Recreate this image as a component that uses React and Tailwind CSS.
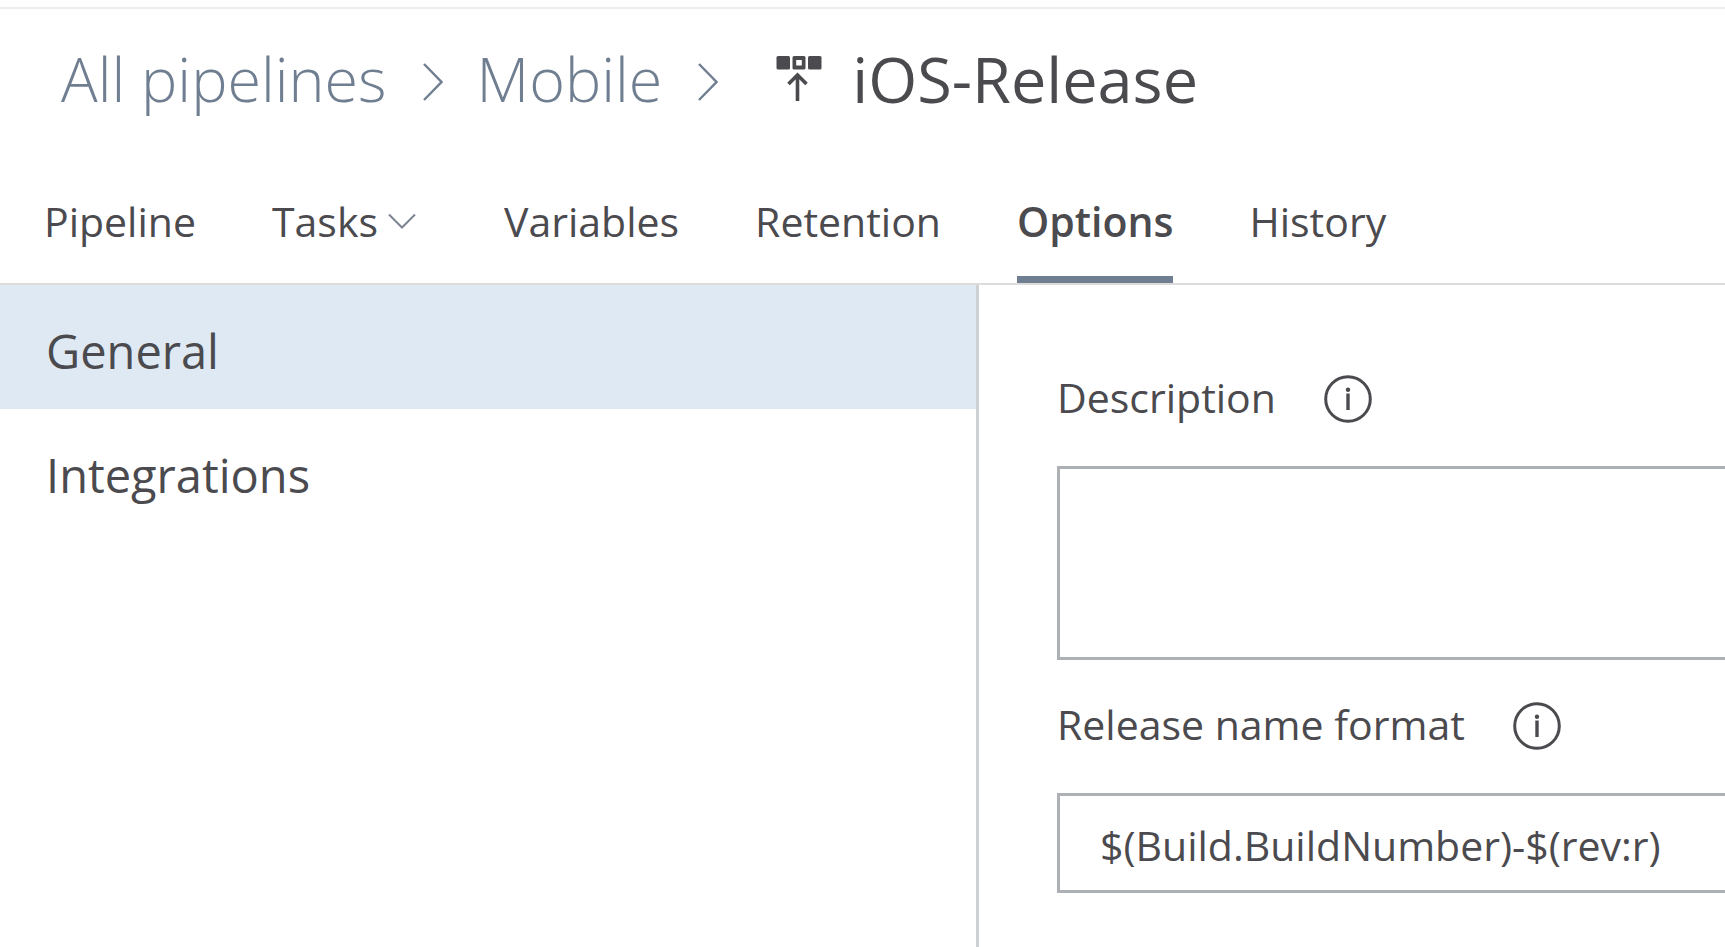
import React from "react";

const tabs = ["Pipeline", "Tasks", "Variables", "Retention", "Options", "History"];

function Separator() {
  return (
    <svg className="h-10 w-5 shrink-0" viewBox="0 0 20 40" fill="none" stroke="#6f7e90" strokeWidth="2.4" aria-hidden="true">
      <path d="M1 2 18.5 20 1 38" />
    </svg>
  );
}

function ChevronDown() {
  return (
    <svg className="h-4 w-7 shrink-0" viewBox="0 0 28 16" fill="none" stroke="#7b8591" strokeWidth="2" aria-hidden="true">
      <path d="M1 1.5 14 14.5 27 1.5" />
    </svg>
  );
}

function ReleaseIcon() {
  return (
    <svg className="h-12 w-12 shrink-0" viewBox="0 0 48 48" fill="#4b4a4e" aria-hidden="true">
      <rect x="0.5" y="1" width="13.5" height="13.5" rx="1.5" />
      <path fillRule="evenodd" d="M18 1h10a1.5 1.5 0 0 1 1.5 1.5v10.5a1.5 1.5 0 0 1-1.5 1.5H18a1.5 1.5 0 0 1-1.500-1.500V2.500A1.500 1.500 0 0 1 18 1Zm2.200 4v5.500h5.600V5Z" />
      <rect x="32" y="1" width="13.5" height="13.5" rx="1.5" />
      <path d="M21.500 46V21M12.500 29 21.500 20 30.500 29" fill="none" stroke="#4b4a4e" strokeWidth="3.600" />
    </svg>
  );
}

function InfoButton({ label }) {
  return (
    <button type="button" aria-label={label} className="size-12 shrink-0">
      <svg className="size-12" viewBox="0 0 48 48" fill="none" aria-hidden="true">
        <circle cx="24" cy="24" r="22.3" stroke="#4b4a4e" strokeWidth="3" />
        <circle cx="24" cy="14.8" r="2.2" fill="#4b4a4e" />
        <path d="M24 18.5v16.5" stroke="#4b4a4e" strokeWidth="3.4" />
      </svg>
    </button>
  );
}

export default function App() {
  return (
    <div className="flex min-h-screen flex-col overflow-x-hidden bg-white pt-[7px] font-['Open_Sans','Noto_Sans',sans-serif] text-[#4b4a4e]">
      <header className="border-t-2 border-[#ececec]">
        <nav aria-label="Breadcrumb" className="flex h-[139px] items-center pl-[61px] text-[61px] leading-[80px] whitespace-nowrap">
          <a href="#all" className="font-light text-[#6f7e90]">All pipelines</a>
          <span className="flex pt-[6px] pr-[34px] pl-9"><Separator /></span>
          <a href="#mobile" className="font-light text-[#6f7e90]">Mobile</a>
          <span className="flex pt-[6px] pr-[58px] pl-9"><Separator /></span>
          <ReleaseIcon />
          <h1 className="pl-7 text-[63px]">iOS-Release</h1>
        </nav>
        <nav aria-label="Sections" className="flex h-[137px] items-stretch gap-[76px] border-b-2 border-[#dedcda] pl-11 text-[41px] leading-[56px] whitespace-nowrap">
          {tabs.map((t) => (
            <button
              key={t}
              type="button"
              className={
                t === "Options"
                  ? "flex items-center border-b-[7px] border-[#6f7e90] pt-[18px] font-semibold"
                  : t === "Tasks"
                    ? "flex items-center gap-2.5 border-b-[7px] border-transparent pt-[18px] pr-3"
                    : "flex items-center border-b-[7px] border-transparent pt-[18px]"
              }
            >
              {t}
              {t === "Tasks" && <ChevronDown />}
            </button>
          ))}
        </nav>
      </header>
      <main className="flex grow">
        <aside className="w-[979px] shrink-0 border-r-[3px] border-[#ced1d4] text-[47px] leading-[60px]">
          <button type="button" className="flex h-[124px] w-full items-center bg-[#dfe9f3] pt-2 pl-[46px]">General</button>
          <button type="button" className="flex h-[124px] w-full items-center pt-2 pl-[46px]">Integrations</button>
        </aside>
        <section className="grow pt-[88px] pl-[78px] text-[41px] leading-[48px] whitespace-nowrap">
          <div className="flex items-center gap-12">
            <label htmlFor="description" className="pb-1">Description</label>
            <InfoButton label="About the description" />
          </div>
          <textarea id="description" className="mt-[41px] block h-[194px] w-full resize-none border-[3px] border-r-0 border-[#adb0b4] p-6 outline-none" />
          <div className="mt-10 flex items-center gap-12">
            <label htmlFor="format" className="pb-1">Release name format</label>
            <InfoButton label="About the release name format" />
          </div>
          <input id="format" type="text" defaultValue="$(Build.BuildNumber)-$(rev:r)" className="mt-[41px] block h-[100px] w-full border-[3px] border-r-0 border-[#adb0b4] pt-1 pl-10 outline-none" />
        </section>
      </main>
    </div>
  );
}
